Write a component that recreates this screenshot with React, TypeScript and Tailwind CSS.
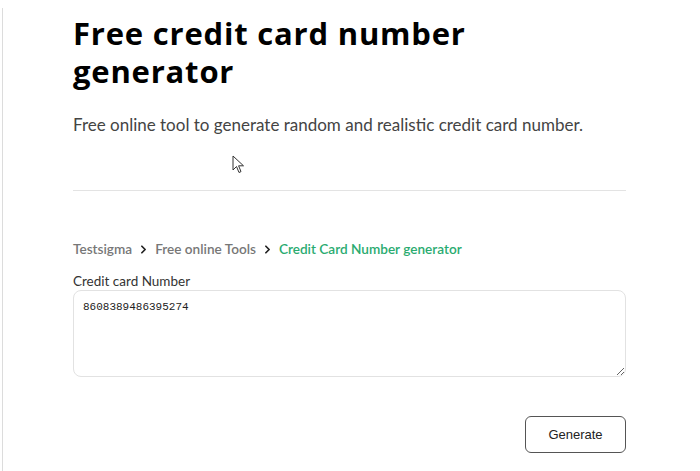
import { ChevronRight } from "lucide-react";

export default function App() {
  return (
    <div className="relative h-[471px] w-[700px] overflow-hidden bg-white">
      <div className="absolute left-[2px] top-[8px] bottom-0 w-px bg-[#dcdcdc]" />
      <div className="ml-[73px] w-[553px] pt-[14px] font-['Lato',sans-serif]">
        <h1 className="font-['Open_Sans',sans-serif] text-[31px] font-bold leading-[38px] tracking-[0.8px] text-black">
          Free credit card number
          <br />
          generator
        </h1>
        <p className="mt-[23px] text-[17px] leading-[24px] text-[#444]">
          Free online tool to generate random and realistic credit card number.
        </p>
        <div className="mt-[53px] h-px bg-[#e3e3e3]" />
        <nav className="mt-[48px] flex items-center text-[13.6px] font-semibold leading-[20px]">
          <span className="text-[#777]">Testsigma</span>
          <ChevronRight className="mx-[5px] h-[13px] w-[13px] text-[#222]" strokeWidth={3.2} />
          <span className="text-[#777]">Free online Tools</span>
          <ChevronRight className="mx-[5px] h-[13px] w-[13px] text-[#222]" strokeWidth={3.2} />
          <span className="text-[#2aab70]">Credit Card Number generator</span>
        </nav>
        <label className="mt-[12px] block text-[13.5px] leading-[20px] text-[#333]">Credit card Number</label>
        <textarea
          readOnly
          value="8608389486395274"
          className="-mt-px block h-[87px] w-full resize-y rounded-[8px] border border-[#e2e2e2] px-[9px] py-[9px] font-['Liberation_Mono',monospace] text-[11px] leading-[14px] text-[#222] outline-none"
        />
        <div className="mt-[39px] flex justify-end">
          <button className="h-[37px] w-[101px] rounded-[6px] border border-[#555] bg-white font-['Liberation_Sans',sans-serif] text-[13px] text-[#222]">
            Generate
          </button>
        </div>
      </div>
      <svg className="absolute left-[232px] top-[155px]" width="13" height="19" viewBox="0 0 13 19">
        <path d="M1 1 L1 15 L4.5 11.5 L7 17.5 L9 16.6 L6.6 10.8 L11.5 10.8 Z" fill="white" stroke="#333" strokeWidth="1" strokeLinejoin="round" />
      </svg>
    </div>
  );
}
